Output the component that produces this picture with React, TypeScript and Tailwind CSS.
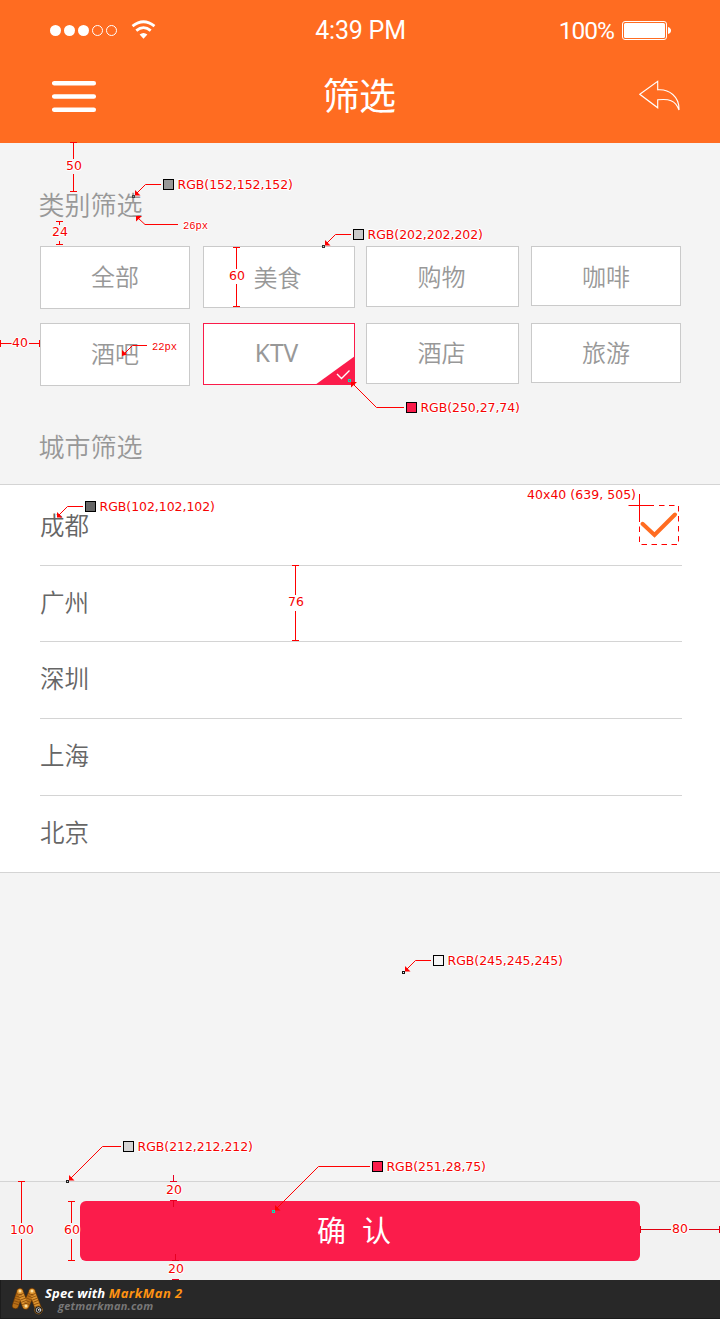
import React from "react";

type Category = { name: string; box: string; selected?: boolean };

const categories: Category[] = [
  { name: "全部", box: "w-[150px] h-[63px] pb-[3px]" },
  { name: "美食", box: "w-[152px] h-[62px] pr-[3px] pb-px" },
  { name: "购物", box: "w-[153px] h-[61px] pr-[2px] pb-[2px]" },
  { name: "咖啡", box: "w-[150px] h-[60px] pb-px" },
  { name: "酒吧", box: "w-[150px] h-[63px] pb-[3px]" },
  { name: "KTV", box: "w-[152px] h-[62px] pb-[2px]", selected: true },
  { name: "酒店", box: "w-[153px] h-[61px] pr-[2px] pb-[3px]" },
  { name: "旅游", box: "w-[150px] h-[60px] pb-[2px]" },
];

const cities = [
  { name: "成都", row: "h-[81px]", selected: true },
  { name: "广州", row: "h-[76px] pb-[3px]" },
  { name: "深圳", row: "h-[77px] pb-[4px]" },
  { name: "上海", row: "h-[77px] pb-[5px]" },
  { name: "北京", row: "h-[76px] border-b-0 pb-[5px]" },
];

function StatusBar() {
  return (
    <div className="flex h-[61px] items-center pl-[49px] pr-[48px]">
      <div className="flex flex-1 items-center">
        <svg width="70" height="14" viewBox="0 0 70 14" fill="#fff" stroke="#fff">
          <circle cx="6.5" cy="6.5" r="5.500" stroke="none" />
          <circle cx="20.5" cy="6.5" r="5.500" stroke="none" />
          <circle cx="34.5" cy="6.5" r="5.500" stroke="none" />
          <circle cx="48.5" cy="6.5" r="5" fill="none" />
          <circle cx="62.5" cy="6.5" r="5" fill="none" />
        </svg>
        <svg className="-mt-px ml-[12px]" width="26" height="20" viewBox="0 0 26 20" fill="none" stroke="#fff">
          <path d="M1.500 6.200Q12.500-2.800 23.500 6.200" strokeWidth="2.800" />
          <path d="M5.300 10.600Q12.500 4.600 19.700 10.600" strokeWidth="2.800" />
          <path d="M8.600 14.600Q12.500 11.200 16.400 14.600L12.500 18.700Z" fill="#fff" stroke="none" />
        </svg>
      </div>
      <div className="pt-px font-[Roboto] text-[25px] font-normal leading-[30px] tracking-[-0.2px] text-white">4:39 PM</div>
      <div className="flex flex-1 items-center justify-end">
        <div className="mr-[8px] pt-px font-[Roboto] text-[24.500px] font-normal leading-[30px] tracking-[-1px] text-white">100%</div>
        <svg width="50" height="20" viewBox="0 0 50 20">
          <rect x="0.5" y="0.5" width="44" height="18" rx="2.5" fill="none" stroke="#fff" />
          <rect x="2" y="2" width="41" height="15" rx="1.5" fill="#fff" />
          <path d="M46 6Q49 7 49 9.500T46 13Z" fill="#fff" />
        </svg>
      </div>
    </div>
  );
}

function Header() {
  return (
    <header className="h-[143px] bg-[#ff6c21]">
      <StatusBar />
      <div className="flex h-[70px] items-center pl-[52px] pr-[39px]">
        <button className="flex-1" aria-label="menu">
          <svg width="46" height="34" viewBox="0 0 46 34" stroke="#fff" strokeWidth="4.5" strokeLinecap="round">
            <path d="M2.200 4.200H41.800M2.200 17.400H41.800M2.200 30.700H41.800" />
          </svg>
        </button>
        <h1 className="-ml-[15px] pb-[3px] text-[37px] font-normal leading-[67px] tracking-[-0.8px] text-white">筛选</h1>
        <button className="flex flex-1 justify-end" aria-label="back">
          <svg width="42" height="34" viewBox="0 0 42 34" fill="none" stroke="#fff" strokeWidth="1.1" strokeLinejoin="miter">
            <path d="M.8 15.300L18.700 2.400V10.800C30 9.800 40.500 17.500 40 31C36.500 21 29.500 19.500 18.700 20.800V28.800Z" />
          </svg>
        </button>
      </div>
    </header>
  );
}

function CategoryButton({ name, box, selected }: Category) {
  return (
    <button
      className={`relative flex items-center justify-center border bg-white text-[24px] leading-[36px] text-[#989898] ${box} ${
        selected ? "border-[#fa1b4a]" : "border-[#cacaca]"
      }`}
    >
      <span className={selected ? "pr-[5px] font-['Noto_Sans',sans-serif] text-[24.500px] font-normal" : ""}>{name}</span>
      {selected && (
        <svg className="absolute -right-px -bottom-px" width="40" height="29" viewBox="0 0 40 29">
          <path d="M0 29L40 0V29Z" fill="#fb1c4b" />
          <path d="M22 18L26.500 22.500L34.500 14.500" fill="none" stroke="#fff" strokeWidth="1.4" />
        </svg>
      )}
    </button>
  );
}

function Label({ x, y, w, children, small }: { x: number; y: number; w: number; children: string; small?: boolean }) {
  return (
    <text
      x={x}
      y={y}
      textLength={w}
      className={
        small
          ? "font-['Liberation_Mono',monospace] text-[10.500px] font-normal"
          : "font-['DejaVu_Sans',sans-serif] text-[12.500px] font-normal"
      }
      fill="#f60303"
      stroke="#fff"
      strokeWidth="2"
      strokeLinejoin="round"
      paintOrder="stroke"
    >
      {children}
    </text>
  );
}

type CalloutProps = {
  at: [number, number];
  elbow: [number, number];
  end: number;
  text: string;
  w: number;
  color: string;
  dot?: string;
  flip?: boolean;
};

function Callout({ at: [ax, ay], elbow: [ex, ey], end, text, w, color, dot, flip }: CalloutProps) {
  const tip = flip
    ? `M${ax + 1.5} ${ay + 1.5}h6l-6 5.500Z`
    : `M${ax + 1.5} ${ay - 1}v-5.500l5.500 5.500Z`;
  return (
    <g>
      <path d={`M${end} ${ey}H${ex}L${ax + 3} ${flip ? ay + 3 : ay - 3}`} fill="none" stroke="red" />
      <path d={tip} fill="red" />
      {dot && <rect x={ax - 1} y={ay - 1} width="2" height="2" fill="none" stroke={dot} />}
      <rect x={end + 2.5} y={ey - 5} width="10" height="10" fill={color} stroke="#000" />
      <Label x={end + 16.5} y={ey + 4.5} w={w}>{text}</Label>
    </g>
  );
}

function Measurements() {
  return (
    <svg className="pointer-events-none absolute inset-0" width="720" height="1319" viewBox="0 0 720 1319" fill="none">
      <g stroke="red">
        <path d="M70 142.500h7M73.500 142.500V159M73.500 174V191.500M70 191.500h7" />
        <path d="M56 221.500h7M59.500 221.500V225M59.500 241V244.500M56 244.500h7" />
        <path d="M233 247.500h7M236.500 247.500V269M236.500 284V306.500M233 306.500h7" />
        <path d="M.5 340v7M.5 343.500H12M29 343.500H39.500M39.500 340v7" />
        <path d="M292 565.500h7M295.500 565.500V595M295.500 611V640.500M292 640.500h7" />
        <path d="M18 1181.500h7M21.500 1181.500V1223M21.500 1239V1280" />
        <path d="M68 1201.500h7M71.500 1201.500V1223M71.500 1239V1260.500M68 1260.500h7" />
        <path d="M173.500 1175V1181.500M170 1181.500h7M170 1200.500h7M173.500 1200.500V1207" stroke="#e80022" />
        <path d="M175.500 1254V1260.500M172 1260.500h7M172 1279.500h7" stroke="#e80022" />
        <path d="M640.500 1226v7M640.500 1229.500H671M689 1229.500H719.500M719.500 1226v7" stroke="#e00010" />
        <path d="M178 224.500H145L138 218M147 345.500H132.500L125 353" />
        <path d="M639.500 494V520M628.500 505.500H654" />
        <path d="M659 505.500H678.500V544.500H639.500V520" strokeDasharray="5.500 4.500" />
      </g>
      <path d="M136 216h6l-6 5.500ZM122 350v6l5-1.500Z" fill="red" />
      <Label x={66} y={170} w={16}>50</Label>
      <Label x={52} y={236} w={16}>24</Label>
      <Label x={229} y={280} w={16}>60</Label>
      <Label x={12} y={347} w={16}>40</Label>
      <Label x={288} y={606} w={16}>76</Label>
      <Label x={166} y={1194} w={16}>20</Label>
      <Label x={168} y={1273} w={16}>20</Label>
      <Label x={10} y={1234} w={24}>100</Label>
      <Label x={64} y={1234} w={16}>60</Label>
      <Label x={672} y={1233} w={16}>80</Label>
      <Label x={527} y={499} w={109}>40x40 (639, 505)</Label>
      <Label x={183} y={229} w={25} small>26px</Label>
      <Label x={152} y={350} w={25} small>22px</Label>
      <Callout at={[133.5, 196.5]} elbow={[145.5, 184.5]} end={161} text="RGB(152,152,152)" w={115.5} color="#989898" dot="#444" />
      <Callout at={[323.5, 246.5]} elbow={[335.5, 234.5]} end={351} text="RGB(202,202,202)" w={115.5} color="#cacaca" dot="#333" />
      <Callout at={[349.5, 380.5]} elbow={[376.5, 407.5]} end={404} text="RGB(250,27,74)" w={99.5} color="#fa1b4a" dot="#04e4b5" flip />
      <Callout at={[55.5, 518.5]} elbow={[67.5, 506.5]} end={83} text="RGB(102,102,102)" w={115.5} color="#666666" />
      <Callout at={[403.5, 972.5]} elbow={[415.5, 960.5]} end={431} text="RGB(245,245,245)" w={115.5} color="#f5f5f5" dot="#111" />
      <Callout at={[67.5, 1181.5]} elbow={[102.5, 1146.5]} end={121} text="RGB(212,212,212)" w={115.5} color="#d4d4d4" dot="#222" />
      <Callout at={[273.5, 1211.5]} elbow={[318.5, 1166.5]} end={370} text="RGB(251,28,75)" w={99.5} color="#fb1c4b" dot="#04e4b5" />
    </svg>
  );
}

function MarkManBar() {
  return (
    <div className="flex h-[39px] items-start border-b border-l border-[#1c1c1c] bg-[#282828] pl-[10px] pt-[6px]">
      <svg width="33" height="30" viewBox="0 0 33 30" strokeLinecap="round" fill="none">
        <g stroke="#6e3b06" strokeWidth="7">
          <path d="M9 5.500L4.500 19.500M9 5.500L14.500 20M21 5.500L15 20M21 5.500L27.500 23" />
        </g>
        <g stroke="#b87018" strokeWidth="5.500">
          <path d="M9 5.500L4.500 19.500M21 5.500L15 20" />
        </g>
        <g stroke="#dc9430" strokeWidth="5.500">
          <path d="M9 5.500L14.500 20M21 5.500L27.500 23" />
        </g>
        <g stroke="#8a4c0c" strokeWidth="5.500" strokeLinecap="butt" strokeDasharray=".8 1.700">
          <path d="M8 8L4.500 19.500M10 8L14.500 20M20 8L16 18M22 8L26.500 20" />
        </g>
        <circle cx="9" cy="5" r="1.500" fill="#ffe1a1" />
        <circle cx="21" cy="5" r="1.500" fill="#ffe1a1" />
        <circle cx="15" cy="20" r="1.500" fill="#ffe1a1" />
        <circle cx="27.5" cy="24" r="4" fill="#111" stroke="#a66a1d" strokeWidth=".7" />
        <circle cx="27.5" cy="24" r="2.300" stroke="#eee" strokeWidth=".8" />
        <circle cx="27.8" cy="23.8" r=".9" fill="#fff" />
      </svg>
      <div className="ml-px flex flex-col font-['Open_Sans',sans-serif] font-bold italic">
        <span className="text-[13px] leading-[15px] tracking-[0.15px] text-white">
          Spec with <span className="tracking-[0.5px] text-[#ff9312]">MarkMan 2</span>
        </span>
        <span className="pl-[13px] text-[11px] leading-[10px] tracking-[0.25px] text-[#777]">getmarkman.com</span>
      </div>
    </div>
  );
}

export default function App() {
  return (
    <div className="relative flex h-[1319px] w-[720px] flex-col overflow-hidden bg-[#f4f4f4] font-['Noto_Sans_CJK_SC',sans-serif] font-[350]">
      <Header />
      <main className="flex-1">
        <h2 className="h-[103px] pl-[38.500px] pt-[41px] text-[26px] leading-[40px] text-[#989898]">类别筛选</h2>
        <div className="grid h-[168px] grid-cols-[163px_163px_165px_150px] grid-rows-[77px_63px] items-start pl-[40px]">
          {categories.map((c) => (
            <CategoryButton key={c.name} {...c} />
          ))}
        </div>
        <h2 className="h-[70px] pl-[38.500px] pt-[12px] text-[26px] leading-[40px] text-[#989898]">城市筛选</h2>
        <ul className="border-y border-[#d4d4d4] bg-white pl-[40px] pr-[38px]">
          {cities.map((c) => (
            <li key={c.name} className={`flex items-center justify-between border-b border-[#d4d4d4] text-[24.500px] leading-[36px] text-[#666] ${c.row}`}>
              <span className={c.selected ? "pb-px" : ""}>{c.name}</span>
              {c.selected && (
                <svg width="43" height="40" viewBox="0 0 43 40" fill="none" stroke="#ff6c21" strokeWidth="4" strokeLinecap="round">
                  <path d="M3.500 18.800L15.500 30L36 9.500" />
                </svg>
              )}
            </li>
          ))}
        </ul>
      </main>
      <footer className="h-[99px] border-t border-[#d4d4d4] bg-[#f2f2f2] px-[80px] pt-[19px]">
        <button className="flex h-[60px] w-full items-center justify-center gap-[16px] rounded-[6px] bg-[#fb1c4b] pb-[5px] pr-[12px] text-[29px] font-normal leading-[44px] text-white">
          <span>确</span>
          <span>认</span>
        </button>
      </footer>
      <MarkManBar />
      <Measurements />
    </div>
  );
}
